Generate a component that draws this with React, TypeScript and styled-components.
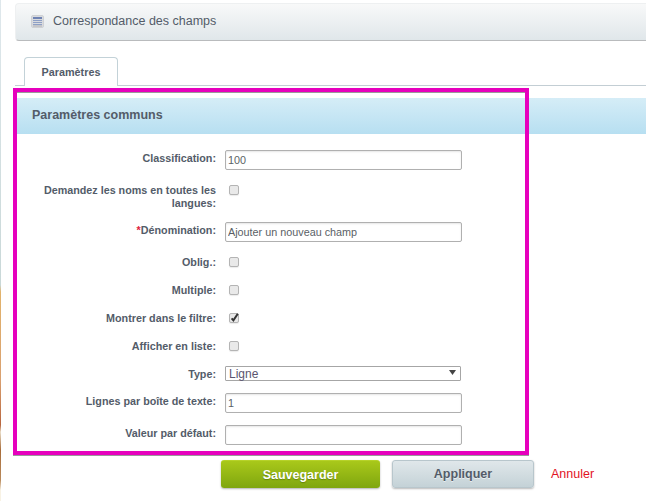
import React from "react";
import styled, { createGlobalStyle } from "styled-components";

const Global = createGlobalStyle`
  html, body { margin: 0; padding: 0; background: #fff; }
  body { font-family: "Liberation Sans", Arial, sans-serif; color: #535c69; }
`;

const Page = styled.div`
  position: relative;
  width: 646px;
  height: 501px;
  overflow: hidden;
  background: #fff;
  padding-top: 3px;
  box-sizing: border-box;
`;

const EdgeStrip = styled.div`
  position: absolute;
  left: 0;
  top: 0;
  bottom: 0;
  width: 1px;
  background: linear-gradient(to bottom, #dfe8ec 0, #c9d8d8 285px, #e2b36c 292px, #d9a070 380px, #b8663f 425px, #e8ddc8 432px, #a86c3a 450px, #b98a5c 480px, #f8f2e4 490px);
`;

const TitleBar = styled.header`
  margin-left: 15px;
  height: 38px;
  box-sizing: border-box;
  display: flex;
  align-items: center;
  gap: 9px;
  padding: 0 0 2px 15px;
  border: 1px solid #eef0f1;
  border-right: none;
  border-bottom: 1px solid #b9bbbd;
  border-radius: 4px 0 0 4px;
  background: linear-gradient(to bottom, #f8f9f9, #e0e7ea);
`;

const TitleText = styled.span`
  font-size: 12.5px;
  line-height: 16px;
  color: #535c69;
`;

const TabBar = styled.nav`
  margin: 16px 0 0 15px;
  height: 29px;
  box-sizing: border-box;
  padding-left: 9px;
  border-bottom: 1px solid #c3ced4;
  display: flex;
`;

const Tab = styled.div`
  width: 94px;
  height: 29px;
  box-sizing: border-box;
  display: flex;
  align-items: center;
  justify-content: center;
  padding-bottom: 1px;
  font-size: 10.8px;
  font-weight: bold;
  color: #535c69;
  background: #fff;
  border: 1px solid #c3d2d8;
  border-bottom: none;
  border-radius: 4px 4px 0 0;
`;

const SectionHeader = styled.h2`
  margin: 12px 0 0 15px;
  height: 36px;
  box-sizing: border-box;
  padding: 0 0 2px 17px;
  display: flex;
  align-items: center;
  font-size: 12.5px;
  font-weight: bold;
  color: #535c69;
  background: linear-gradient(to bottom, #d5edf7, #b7dff1);
`;

const Form = styled.form`
  width: 462px;
  display: flex;
  flex-direction: column;
  padding-top: 16px;
`;

const Row = styled.div<{ $gap: number; $height: number }>`
  display: grid;
  grid-template-columns: 216px 1fr;
  column-gap: 9px;
  height: ${(p) => p.$height}px;
  margin-top: ${(p) => p.$gap}px;
`;

const Label = styled.label<{ $top: number }>`
  padding: ${(p) => p.$top}px 0 0 30px;
  text-align: right;
  font-size: 10.75px;
  line-height: 13px;
  font-weight: bold;
  color: #535c69;
`;

const Required = styled.span`
  color: #e0203c;
`;

const TextInput = styled.input`
  width: 237px;
  height: 20px;
  box-sizing: border-box;
  padding: 0 2px;
  border: 1px solid #b0b0b0;
  border-radius: 2px;
  box-shadow: inset 0 1px 2px rgba(0, 0, 0, 0.1);
  font: 10.8px "Liberation Sans", Arial, sans-serif;
  color: #5a5f66;
  background: #fff;
  outline: none;
`;

const Check = styled.input.attrs({ type: "checkbox" })`
  appearance: none;
  display: block;
  width: 10px;
  height: 10px;
  margin: 2px 0 0 4px;
  box-sizing: border-box;
  border: 1px solid #b4b4b4;
  border-radius: 2px;
  background: #e9e9e9;
  box-shadow: 0 1px 1px rgba(0, 0, 0, 0.08);
`;

const CheckWrap = styled.div`
  position: relative;
  height: 15px;
`;

const Tick = styled.svg`
  position: absolute;
  left: 4px;
  top: 1px;
  width: 11px;
  height: 11px;
  pointer-events: none;
`;

const SelectBox = styled.div`
  position: relative;
  width: 236px;
  height: 15px;
  box-sizing: border-box;
  border: 1px solid #a6a6a6;
  border-radius: 1px;
  display: flex;
  align-items: center;
  padding: 0 0 0 3px;
  font-size: 12px;
  color: #5a5570;
  background: #fff;
`;

const Arrow = styled.svg`
  position: absolute;
  right: 4px;
  top: 3px;
  width: 7px;
  height: 5px;
`;

const Actions = styled.div`
  display: flex;
  align-items: center;
  margin: 15px 0 0 221px;
`;

const PrimaryButton = styled.button`
  width: 159px;
  height: 28px;
  padding: 0;
  border: none;
  border-top: 1px solid #b6d22a;
  border-radius: 3px;
  font: bold 12.5px "Liberation Sans", Arial, sans-serif;
  color: #fff;
  text-shadow: 0 1px 1px rgba(60, 80, 0, 0.45);
  background: linear-gradient(to bottom, #a9c81a, #7fa60f);
  box-shadow: 0 1px 2px rgba(0, 0, 0, 0.3);
`;

const SecondaryButton = styled.button`
  width: 142px;
  height: 28px;
  margin-left: 12px;
  padding: 0;
  border: 1px solid #b8c6cc;
  border-radius: 3px;
  font: bold 12.5px "Liberation Sans", Arial, sans-serif;
  color: #535c69;
  text-shadow: 0 1px 0 rgba(255, 255, 255, 0.6);
  background: linear-gradient(to bottom, #e0e7ea, #c4d2d7);
  box-shadow: 0 1px 2px rgba(0, 0, 0, 0.28);
`;

const CancelLink = styled.a`
  margin-left: 17px;
  font-size: 12.5px;
  color: #e2131f;
`;

const Highlight = styled.div`
  position: absolute;
  left: 13px;
  top: 88px;
  width: 516px;
  height: 367px;
  box-sizing: border-box;
  border: 4px solid #e600bd;
  box-shadow: inset 0 1px 0 #9a9a9a, 0 1px 0 #9a9a9a;
  pointer-events: none;
`;

const ListIcon = () => (
  <svg width="13" height="13" viewBox="0 0 13 13" aria-hidden="true">
    <rect x="0.5" y="0.5" width="12" height="12" rx="1.5" fill="#d8dade" stroke="#cfd1d4" />
    <rect x="2" y="2" width="9" height="2" fill="#6f83b3" />
    <rect x="2" y="5" width="9" height="1" fill="#8ea0c6" />
    <rect x="2" y="7" width="9" height="1" fill="#8ea0c6" />
    <rect x="2" y="9" width="9" height="1" fill="#8ea0c6" />
    <rect x="2" y="10.5" width="9" height="1" fill="#b0b0b4" />
  </svg>
);

const CheckField = ({ checked }: { checked?: boolean }) => (
  <CheckWrap>
    <Check defaultChecked={checked} />
    {checked && (
      <Tick viewBox="0 0 11 11" aria-hidden="true">
        <path d="M2.6 6.4 L4.4 8.4 L8.8 1.8" fill="none" stroke="#333" strokeWidth="2" />
      </Tick>
    )}
  </CheckWrap>
);

export default function App() {
  return (
    <Page>
      <Global />
      <EdgeStrip />
      <TitleBar>
        <ListIcon />
        <TitleText>Correspondance des champs</TitleText>
      </TitleBar>
      <TabBar>
        <Tab>Paramètres</Tab>
      </TabBar>
      <SectionHeader>Paramètres communs</SectionHeader>
      <Form>
        <Row $gap={0} $height={20}>
          <Label $top={2}>Classification:</Label>
          <TextInput defaultValue="100" />
        </Row>
        <Row $gap={13} $height={26}>
          <Label $top={1}>Demandez les noms en toutes les langues:</Label>
          <CheckField />
        </Row>
        <Row $gap={13} $height={20}>
          <Label $top={2}>
            <Required>*</Required>Dénomination:
          </Label>
          <TextInput defaultValue="Ajouter un nouveau champ" />
        </Row>
        <Row $gap={13} $height={15}>
          <Label $top={1}>Oblig.:</Label>
          <CheckField />
        </Row>
        <Row $gap={13} $height={15}>
          <Label $top={1}>Multiple:</Label>
          <CheckField />
        </Row>
        <Row $gap={13} $height={15}>
          <Label $top={1}>Montrer dans le filtre:</Label>
          <CheckField checked />
        </Row>
        <Row $gap={13} $height={15}>
          <Label $top={1}>Afficher en liste:</Label>
          <CheckField />
        </Row>
        <Row $gap={12} $height={15}>
          <Label $top={2}>Type:</Label>
          <SelectBox>
            Ligne
            <Arrow viewBox="0 0 7 5" aria-hidden="true">
              <path d="M0 0 H7 L3.5 5 Z" fill="#444" />
            </Arrow>
          </SelectBox>
        </Row>
        <Row $gap={12} $height={20}>
          <Label $top={2}>Lignes par boîte de texte:</Label>
          <TextInput defaultValue="1" />
        </Row>
        <Row $gap={12} $height={20}>
          <Label $top={2}>Valeur par défaut:</Label>
          <TextInput />
        </Row>
      </Form>
      <Actions>
        <PrimaryButton type="button">Sauvegarder</PrimaryButton>
        <SecondaryButton type="button">Appliquer</SecondaryButton>
        <CancelLink>Annuler</CancelLink>
      </Actions>
      <Highlight />
    </Page>
  );
}
